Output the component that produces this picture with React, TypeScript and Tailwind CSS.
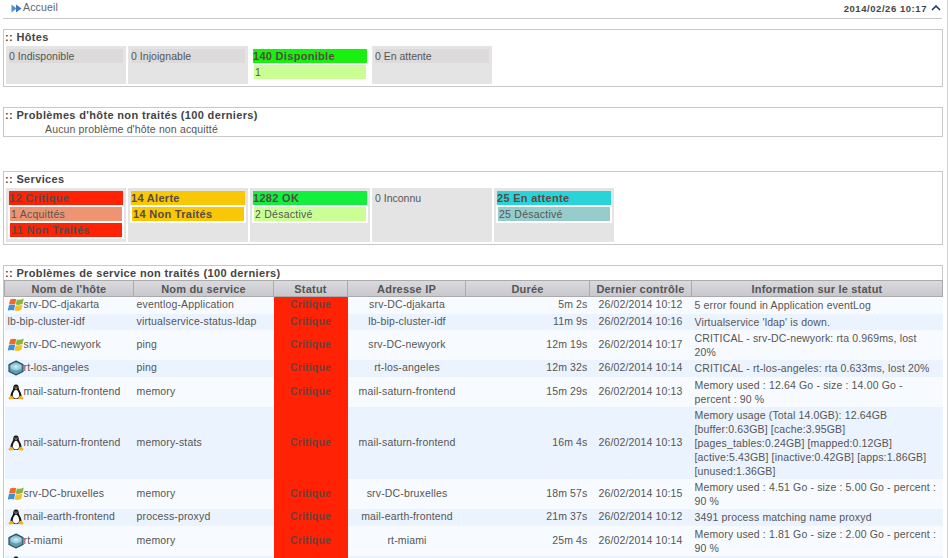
const FONT = "font-['Liberation_Sans',Arial,sans-serif]"

function Windows() {
  return (
    <svg width="16" height="16" viewBox="0 0 16 16" className="shrink-0">
      <path d="M2.2 2.6 Q5 1 8.2 2.2 L7.2 7.4 Q4 6.4 1 7.6 Z" fill="#f0682a" />
      <path d="M8.8 2.4 Q12 3.4 15.8 1.4 L14.6 6.8 Q11 8.6 7.8 7.6 Z" fill="#86b83a" />
      <path d="M0.9 8.2 Q4 7 7.1 8 L6 13.4 Q3 12.4 -0.2 13.6 Z" fill="#3d8fd8" />
      <path d="M7.7 8.2 Q11 9.2 14.5 7.4 L13.4 12.8 Q9.8 14.8 6.6 13.6 Z" fill="#f6c02c" />
    </svg>
  )
}

function Tux() {
  return (
    <svg width="16" height="16" viewBox="0 0 16 16" className="shrink-0">
      <path d="M8 0.5 C5.6 0.5 5.2 2.6 5.2 4.4 C5.2 6 2.5 8.5 2.5 11.5 C2.5 13.5 4 15 8 15 C12 15 13.5 13.5 13.5 11.5 C13.5 8.5 10.8 6 10.8 4.4 C10.8 2.6 10.4 0.5 8 0.5 Z" fill="#111" />
      <path d="M8 5.8 C6.3 6 4.8 9 4.8 11.2 C4.8 13.2 6.2 14.4 8 14.4 C9.8 14.4 11.2 13.2 11.2 11.2 C11.2 9 9.7 6 8 5.8 Z" fill="#fff" />
      <circle cx="7" cy="3" r="0.6" fill="#fff" />
      <circle cx="9" cy="3" r="0.6" fill="#fff" />
      <path d="M6.6 4.2 L9.4 4.2 L8 5.6 Z" fill="#f2b01e" />
      <path d="M3 11.6 L5.4 13 L5.8 15 L1.2 15.6 L0.4 14 Z" fill="#f2b01e" />
      <path d="M13 11.6 L10.6 13 L10.2 15 L14.8 15.6 L15.6 14 Z" fill="#f2b01e" />
    </svg>
  )
}

function Router() {
  return (
    <svg width="16" height="16" viewBox="0 0 16 16" className="shrink-0">
      <path d="M8 1 L15 4.5 L15 11.5 L8 15 L1 11.5 L1 4.5 Z" fill="#5f9db5" stroke="#1d3f50" strokeWidth="1.1" />
      <ellipse cx="8" cy="6.8" rx="5.6" ry="3.6" fill="#9fd0df" />
      <path d="M5.5 6.8 L10.5 6.8 M8 5 L8 8.6" stroke="#e8f6fa" strokeWidth="0.8" />
    </svg>
  )
}

const ICONS = { win: <Windows />, tux: <Tux />, rt: <Router /> }

type Row = { host: string; icon?: "win" | "tux" | "rt"; service: string; ip: string; dur: string; last: string; info: string; h: number; status?: string }

const ROWS: Row[] = [
  { host: "srv-DC-djakarta", icon: "win", service: "eventlog-Application", ip: "srv-DC-djakarta", dur: "5m 2s", last: "26/02/2014 10:12", info: "5 error found in Application eventLog", h: 17, status: "Critique" },
  { host: "lb-bip-cluster-idf", service: "virtualservice-status-ldap", ip: "lb-bip-cluster-idf", dur: "11m 9s", last: "26/02/2014 10:16", info: "Virtualservice 'ldap' is down.", h: 16, status: "Critique" },
  { host: "srv-DC-newyork", icon: "win", service: "ping", ip: "srv-DC-newyork", dur: "12m 19s", last: "26/02/2014 10:17", info: "CRITICAL - srv-DC-newyork: rta 0.969ms, lost 20%", h: 30, status: "Critique" },
  { host: "rt-los-angeles", icon: "rt", service: "ping", ip: "rt-los-angeles", dur: "12m 32s", last: "26/02/2014 10:14", info: "CRITICAL - rt-los-angeles: rta 0.633ms, lost 20%", h: 17, status: "Critique" },
  { host: "mail-saturn-frontend", icon: "tux", service: "memory", ip: "mail-saturn-frontend", dur: "15m 29s", last: "26/02/2014 10:13", info: "Memory used : 12.64 Go - size : 14.00 Go - percent : 90 %", h: 30, status: "Critique" },
  { host: "mail-saturn-frontend", icon: "tux", service: "memory-stats", ip: "mail-saturn-frontend", dur: "16m 4s", last: "26/02/2014 10:13", info: "Memory usage (Total 14.0GB): 12.64GB [buffer:0.63GB] [cache:3.95GB] [pages_tables:0.24GB] [mapped:0.12GB] [active:5.43GB] [inactive:0.42GB] [apps:1.86GB] [unused:1.36GB]", h: 72, status: "Critique" },
  { host: "srv-DC-bruxelles", icon: "win", service: "memory", ip: "srv-DC-bruxelles", dur: "18m 57s", last: "26/02/2014 10:15", info: "Memory used : 4.51 Go - size : 5.00 Go - percent : 90 %", h: 30, status: "Critique" },
  { host: "mail-earth-frontend", icon: "tux", service: "process-proxyd", ip: "mail-earth-frontend", dur: "21m 37s", last: "26/02/2014 10:12", info: "3491 process matching name proxyd", h: 17, status: "Critique" },
  { host: "rt-miami", icon: "rt", service: "memory", ip: "rt-miami", dur: "25m 4s", last: "26/02/2014 10:14", info: "Memory used : 1.81 Go - size : 2.00 Go - percent : 90 %", h: 30, status: "Critique" },
  // only the top of the icon shows above the fold
  { host: "", icon: "tux", service: "", ip: "", dur: "", last: "", info: "", h: 17 },
]

function Box({ title, className, children }: { title: string; className?: string; children: React.ReactNode }) {
  return (
    <div className={`border border-[#c8c8c8] mr-[4px] ml-[3px] ${className ?? ""}`}>
      <div className="pl-[1px] h-[14px] leading-[14px] font-bold text-[11px] tracking-[0.35px] text-[#444]">:: {title}</div>
      {children}
    </div>
  )
}

const LABEL = "h-[14px] leading-[14px] text-[10.5px]"
const STRONG = "h-[14px] leading-[14px] font-bold text-[11px] tracking-[0.3px] text-[#5a4a45]"

function Cell({ label, cls, subs = [], h }: { label: string; cls: string; subs?: { text: string; cls: string }[]; h: string }) {
  return (
    <div className={`w-[120px] bg-[#e4e4e4] p-[3px] ${h}`}>
      <div className={cls}>{label}</div>
      {subs.length > 0 && (
        <div className="bg-white px-[2px] py-[2px] -mx-[1px] flex flex-col gap-[2px]">
          {subs.map(s => (
            <div key={s.text} className={`${s.cls} pl-[1px]`}>{s.text}</div>
          ))}
        </div>
      )}
    </div>
  )
}

export default function App() {
  return (
    <div className={`${FONT} w-[948px] h-[558px] overflow-hidden bg-white text-[#555] text-[10.5px] border-r border-[#d0d0d0]`}>
      <div className="h-[19px] ml-[3px] mr-[5px] border-b border-[#c8c8c8] flex items-center justify-between">
        <div className="flex items-center pl-[8px] text-[#5b6472] text-[10.5px] tracking-[0.15px] -mt-[2px]">
          <svg width="11" height="9" viewBox="0 0 11 9" className="mr-[1px]">
            <path d="M0.5 0.5 L5.5 4.5 L0.5 8.5 Z" fill="#4f8fd8" />
            <path d="M5 0.5 L10.5 4.5 L5 8.5 Z" fill="#3e74c4" />
          </svg>
          Accueil
        </div>
        <div className="flex items-center text-[#444] font-bold text-[9.5px] tracking-[0.55px]">
          2014/02/26 10:17
          <svg width="10" height="6" viewBox="0 0 10 6" className="ml-[4px] mr-[1px] mb-[2px]">
            <path d="M1 5 L5 1 L9 5" fill="none" stroke="#1c2e55" strokeWidth="1.5" />
          </svg>
        </div>
      </div>

      <Box title="Hôtes" className="mt-[10px] h-[58px]">
        <div className="flex gap-[2px] pl-[2px] pt-[2px]">
          <Cell h="h-[38px]" label="0 Indisponible" cls={`${LABEL} tracking-[0.05px] bg-[#dcdada]`} />
          <Cell h="h-[38px]" label="0 Injoignable" cls={`${LABEL} tracking-[0.05px] bg-[#dcdada]`} />
          <div className="w-[120px] h-[38px] bg-white p-[3px]">
            <div className={`${STRONG} bg-[#19f00f]`}>140 Disponible</div>
            <div className={`${LABEL} mt-[2px] mx-[1px] pl-[1px] bg-[#c9ff94]`}>1</div>
          </div>
          <Cell h="h-[38px]" label="0 En attente" cls={`${LABEL} bg-[#dcdada]`} />
        </div>
      </Box>

      <Box title="Problèmes d'hôte non traités (100 derniers)" className="mt-[20px] h-[30px]">
        <div className="pl-[41px] h-[13px] leading-[14px] text-[10.5px] tracking-[0.15px]">Aucun problème d'hôte non acquitté</div>
      </Box>

      <Box title="Services" className="mt-[34px] h-[74px]">
        <div className="flex gap-[2px] pl-[2px] pt-[2px]">
          <Cell h="h-[54px]" label="12 Critique" cls={`${STRONG} bg-[#ff2205]`} subs={[
            { text: "1 Acquittés", cls: `${LABEL} tracking-[0.25px] bg-[#ee9472]` },
            { text: "11 Non Traités", cls: `${STRONG} bg-[#ff2205]` },
          ]} />
          <Cell h="h-[54px]" label="14 Alerte" cls={`${STRONG} bg-[#f8c705]`} subs={[
            { text: "14 Non Traités", cls: `${STRONG} bg-[#f8c705]` },
          ]} />
          <Cell h="h-[54px]" label="1282 OK" cls={`${STRONG} bg-[#12ef3d]`} subs={[
            { text: "2 Désactivé", cls: `${LABEL} tracking-[0.25px] bg-[#c9ff94]` },
          ]} />
          <Cell h="h-[54px]" label="0 Inconnu" cls={LABEL} />
          <Cell h="h-[54px]" label="25 En attente" cls={`${STRONG} bg-[#29d4d8]`} subs={[
            { text: "25 Désactivé", cls: `${LABEL} tracking-[0.25px] bg-[#97cccc]` },
          ]} />
        </div>
      </Box>

      <Box title="Problèmes de service non traités (100 derniers)" className="mt-[20px]">
        <table className="table-fixed border-collapse w-[938px] text-[10.5px] tracking-[0.15px]">
          <colgroup>
            <col className="w-[129px]" />
            <col className="w-[140px]" />
            <col className="w-[74px]" />
            <col className="w-[118px]" />
            <col className="w-[124px]" />
            <col className="w-[102px]" />
            <col className="w-[251px]" />
          </colgroup>
          <thead>
            <tr className="h-[16px] bg-gradient-to-b from-[#dadade] to-[#c6c6cc] text-[#555]">
              {["Nom de l'hôte", "Nom du service", "Statut", "Adresse IP", "Durée", "Dernier contrôle", "Information sur le statut"].map(t => (
                <th key={t} className="p-0 font-bold text-[11px] leading-[14px] tracking-[0.2px] border border-[#aaaaaa]">{t}</th>
              ))}
            </tr>
          </thead>
          <tbody>
            {ROWS.map((r, i) => (
              <tr key={i} className={i % 2 === 0 ? "bg-[#f7fbff]" : "bg-[#ebf3ff]"} style={{ height: r.h }}>
                <td className="p-0 pl-[3px]">
                  <div className="flex items-center whitespace-nowrap">
                    {r.icon && ICONS[r.icon]}
                    {r.host}
                  </div>
                </td>
                <td className="p-0 pl-[3px] whitespace-nowrap">{r.service}</td>
                <td className="p-0 bg-[#ff2205] text-center font-bold text-[#6e4038]">{r.status}</td>
                <td className="p-0 pl-[1px] text-center whitespace-nowrap">{r.ip}</td>
                <td className="p-0 pr-[2px] text-right">{r.dur}</td>
                <td className="p-0 text-center">{r.last}</td>
                <td className="p-0 pl-[3px] pr-[3px] leading-[14px]">{r.info}</td>
              </tr>
            ))}
          </tbody>
        </table>
      </Box>
    </div>
  )
}
